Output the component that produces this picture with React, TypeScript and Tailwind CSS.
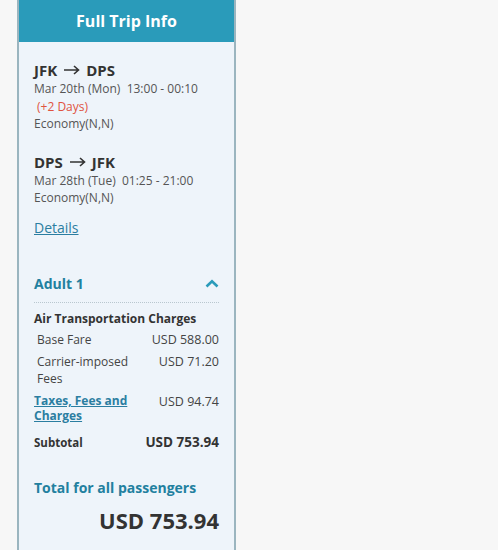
import { useState } from 'react'

const font = { fontFamily: '"Open Sans", "Noto Sans", sans-serif' }

function Arrow() {
    return (
        <svg width="17" height="10" viewBox="0 0 17 10" className="mx-[6px]">
            <path d="M1 5 H15.5 M11 1 L15.5 5 L11 9" fill="none" stroke="#333" strokeWidth="1.6" />
        </svg>
    )
}

function Leg({ from, to, date, extra, className }: { from: string; to: string; date: string; extra?: string; className?: string }) {
    return (
        <div className={className}>
            <div className="text-[15px] font-bold text-[#333] leading-[20px] flex items-center">
                {from}
                <Arrow />
                {to}
            </div>
            <div className="text-[12px] text-[#555] leading-[17.5px] whitespace-pre">{date}</div>
            {extra && <div className="text-[12px] text-[#e0533f] leading-[17.5px] pl-[3px]">{extra}</div>}
            <div className="text-[12px] text-[#555] leading-[17.5px]">Economy(N,N)</div>
        </div>
    )
}

export default function App() {
    const [ open, setOpen ] = useState(true)

    return (
        <div className="min-h-[550px] h-[550px] bg-[#f7f7f7] pl-[17px] overflow-hidden" style={font}>
            <div className="w-[219px] h-full border-x-2 border-[#9bb5bf] bg-[#eef4fa] flex flex-col">
                <div className="h-[42px] bg-[#2a9bba] flex items-center justify-center text-white text-[16px] font-bold">
                    Full Trip Info
                </div>
                <div className="px-[15px] pt-[18px]">
                    <Leg className="mb-[19px]" from="JFK" to="DPS" date="Mar 20th (Mon)  13:00 - 00:10" extra="(+2 Days)" />
                    <Leg from="DPS" to="JFK" date="Mar 28th (Tue)  01:25 - 21:00" />
                    <a href="#" className="text-[14px] text-[#2b7ea1] underline leading-[20px] block mt-[11px]">Details</a>

                    <div className="mt-[35px] flex items-center justify-between">
                        <span className="text-[14px] font-bold text-[#22809f]">Adult 1</span>
                        <button type="button" onClick={() => setOpen(p => !p)} className="text-[#2a9bba]">
                            <svg width="14" height="9" viewBox="0 0 14 9">
                                <path d={open ? 'M1.5 7.5 L7 2.2 L12.5 7.5' : 'M1.5 1.5 L7 6.8 L12.5 1.5'} fill="none" stroke="currentColor" strokeWidth="2.6" />
                            </svg>
                        </button>
                    </div>
                    <div className="mt-[8px] border-t border-dotted border-[#b9c7cf]" />
                    {open && (
                        <div className="text-[12px] leading-[17px]">
                            <div className="mt-[7px] font-bold text-[#333]">Air Transportation Charges</div>
                            <div className="mt-[4px] flex justify-between pl-[3px] text-[#444]">
                                <span>Base Fare</span>
                                <span className="text-[12.5px]">USD 588.00</span>
                            </div>
                            <div className="mt-[5px] flex justify-between pl-[3px] text-[#444]">
                                <span className="w-[100px]">Carrier-imposed Fees</span>
                                <span className="text-[12.5px]">USD 71.20</span>
                            </div>
                            <div className="mt-[6px] flex justify-between text-[#444]">
                                <a href="#" className="w-[110px] font-bold text-[#2b7ea1] underline leading-[15px]">Taxes, Fees and Charges</a>
                                <span className="text-[12.5px]">USD 94.74</span>
                            </div>
                            <div className="mt-[11px] flex justify-between items-center font-bold text-[#333]">
                                <span className="text-[11.5px]">Subtotal</span>
                                <span className="text-[13.5px]">USD 753.94</span>
                            </div>
                        </div>
                    )}
                    <div className="mt-[27px] text-[14px] font-bold text-[#22809f] leading-[20px]">Total for all passengers</div>
                    <div className="mt-[8px] text-right text-[22px] font-bold text-[#333] leading-[28px]">USD 753.94</div>
                </div>
            </div>
        </div>
    )
}
